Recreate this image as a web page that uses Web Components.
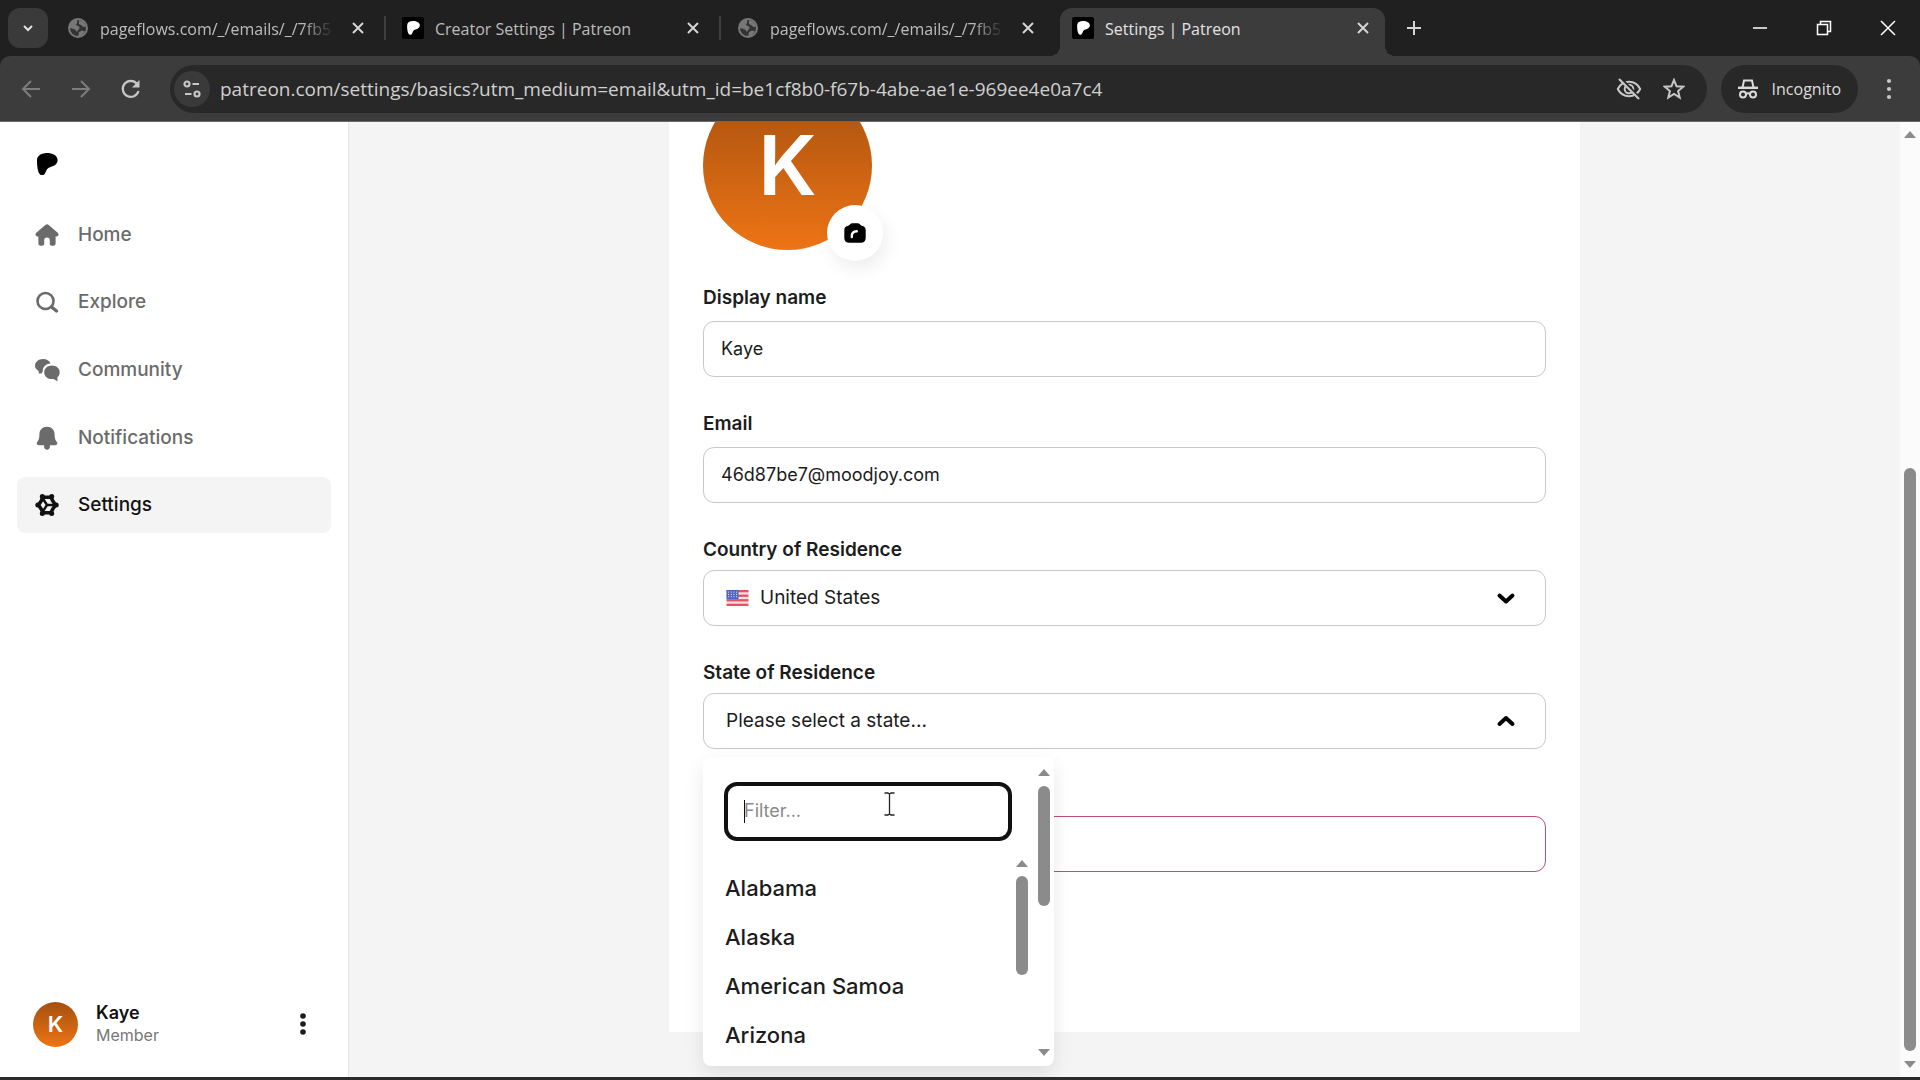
<!DOCTYPE html>
<html lang="en">
<head>
<meta charset="utf-8">
<title>Settings | Patreon</title>
<style>
html, body { margin: 0; height: 100%; }
body { font-family: Inter, "Liberation Sans", sans-serif; color: #1c1c1c; overflow: hidden; }
</style>
</head>
<body>
<browser-window></browser-window>

<script>
const RESET = `*,*::before,*::after{box-sizing:border-box}
button,input,select{font:inherit;color:inherit;border:0;background:none;padding:0;margin:0;outline:0;appearance:none}
a{color:inherit;text-decoration:none}
svg{display:block;flex:none}`;

const define = (name, render) => customElements.define(name, class extends HTMLElement {
  connectedCallback() {
    if (this.shadowRoot) return;
    const html = render(this);
    this.attachShadow({ mode: 'open' }).innerHTML = `<style>${RESET}</style>${html}`;
  }
});

const PATREON = 'M1 7.2C1 3.2 4.4.6 8.9.2 15.4-.5 21.5 2.300 21.6 7c.1 4-3.400 5.800-7.200 6.900-3.200 1-3.700 2.700-4.700 5-.9 2-1.900 3.400-3.800 3.300C1.800 22.100 1 13.200 1 7.200z';

const ICONS = {
  globe: [22, '<circle cx="11" cy="11" r="9" fill="#333" stroke="#777" stroke-width="2"/><path d="M3 7c2-4 5-5.500 8-5l-1 2.500c1 1.500-1 2-1 3.500l3 1.500c1 1 .5 2.500-1 3.500l-1 2-2-2.500L3 11z" fill="#777"/><path d="M12 3l4 1.500 3.500 5-3 .5-2.500-2-2-1zM12 15l3-1.500 3 1-3 4-4 1.500z" fill="#777"/>'],
  favicon: [22, `<rect width="22" height="22" rx="2" fill="#000"/><g transform="translate(4.500 4) scale(.62)"><path d="${PATREON}" fill="#fff"/></g>`],
  close: [14, '<path d="M2 2l10 10M12 2L2 12" stroke="currentColor" stroke-width="2"/>'],
  plus: [16, '<path d="M8 1v14M1 8h14" stroke="currentColor" stroke-width="2"/>'],
  down: [12, '<path d="M2 4l4 4 4-4" fill="none" stroke="currentColor" stroke-width="2"/>'],
  minimise: [16, '<path d="M1 8h14" stroke="currentColor" stroke-width="1.500"/>'],
  restore: [16, '<path d="M1.500 4.500h10v10h-10zM4.500 4.500v-3h10v10h-3" fill="none" stroke="currentColor" stroke-width="1.500"/>'],
  shut: [16, '<path d="M1 1l14 14M15 1L1 15" stroke="currentColor" stroke-width="1.500"/>'],
  back: [20, '<path d="M19 10H2M10 2l-8 8 8 8" fill="none" stroke="currentColor" stroke-width="2"/>'],
  forward: [20, '<path d="M1 10h17M10 2l8 8-8 8" fill="none" stroke="currentColor" stroke-width="2"/>'],
  reload: [20, '<path d="M17.500 12A8 8 0 1 1 16 4.800" fill="none" stroke="currentColor" stroke-width="2.200"/><path d="M18.500 1v7.500H11z" fill="currentColor"/>'],
  tune: [20, '<g fill="none" stroke="currentColor" stroke-width="2.200"><circle cx="5" cy="5" r="2.500"/><path d="M10.500 5H17M3 15h6.500"/><circle cx="15" cy="15" r="2.500"/></g>'],
  eyeoff: [26, '<g fill="none" stroke="currentColor" stroke-width="2"><path d="M1.800 13C4 8.500 8 5.800 13 5.800S22 8.500 24.200 13C22 17.500 18 20.200 13 20.200S4 17.500 1.800 13z"/><circle cx="13" cy="13" r="4.300"/></g><path d="M5.500 2.800l19 20" stroke="#282828" stroke-width="2.500"/><path d="M3 3l20 20" stroke="currentColor" stroke-width="2.200"/>'],
  star: [22, '<path d="M11 2l2.500 6.200 6.700.5-5.100 4.300 1.600 6.500L11 16l-5.700 3.500 1.600-6.500L1.800 8.700l6.700-.5z" fill="none" stroke="currentColor" stroke-width="2"/>'],
  incognito: [22, '<g fill="none" stroke="currentColor" stroke-width="2"><path d="M5.500 9.500L7 2.500h8l1.500 7"/><path d="M1 9.800h20" stroke-width="2.400"/><circle cx="6" cy="16.500" r="3"/><circle cx="16" cy="16.500" r="3"/><path d="M9 16q2-1.500 4 0"/></g>'],
  kebab: [24, '<g fill="currentColor"><circle cx="12" cy="4" r="2.100"/><circle cx="12" cy="12" r="2.100"/><circle cx="12" cy="20" r="2.100"/></g>'],
  more: [24, '<g fill="currentColor"><circle cx="12" cy="4" r="2.800"/><circle cx="12" cy="12" r="2.800"/><circle cx="12" cy="20" r="2.800"/></g>'],
  logo: [22, `<path d="${PATREON}" fill="#000"/>`],
  home: [24, '<path d="M10.300 1.900a2.600 2.600 0 0 1 3.400 0l9 7.900c1.500 1.400.8 3.600-1.200 3.600h-.9v7.100c0 1.300-.9 2.200-2.200 2.200h-1.600c-1.200 0-2-.8-2-2v-3.300a2.800 2.800 0 0 0-5.600 0v3.300c0 1.200-.8 2-2 2H5.600c-1.300 0-2.200-.9-2.200-2.200v-7.100h-.9c-2 0-2.700-2.200-1.200-3.600z" fill="currentColor"/>'],
  search: [24, '<circle cx="10.500" cy="11" r="8" fill="none" stroke="currentColor" stroke-width="2.600"/><path d="M16.500 17l5 4" stroke="currentColor" stroke-width="3.400" stroke-linecap="round"/>'],
  chats: [26, '<path d="M9 2c3.600 0 6.500 1.800 7.500 4.400C11.600 6.800 8.600 10 8.800 14.200l-1.300 2.300-2.600.1-.4-2.900C2.300 12.500 1 10.800 1 8.700 1 4.900 4.600 2 9 2z" fill="currentColor"/><path d="M18 8.500c4.400 0 7.700 2.900 7.700 6.700 0 2-.8 3.700-2.300 5l.1 4-4-2.200c-5.300.7-9.300-2.400-9.300-6.800 0-3.800 3.400-6.700 7.800-6.700z" fill="currentColor"/>'],
  bell: [24, '<path d="M12 .8c-4.600 0-7.600 3.300-7.600 7.600 0 3.600-.7 5.600-2.100 7.400-1.300 1.700-.6 3.400 1.500 3.400h5.300v1.600c0 1.700 1.200 2.900 2.900 2.900s2.900-1.200 2.900-2.900v-1.600h5.300c2.100 0 2.800-1.700 1.500-3.400-1.400-1.800-2.100-3.800-2.100-7.400C19.600 4.100 16.600.8 12 .8z" fill="currentColor"/>'],
  gear: [24, '<g fill="none" stroke="currentColor" stroke-linejoin="round"><path d="M8 4.200h8l1.500 3.400 3 4.400-3 4.400-1.500 3.400H8l-1.500-3.400-3-4.400 3-4.400z" stroke-width="3.600"/><path d="M12 12h8M12 12L7.500 5M12 12l-4.500 7" stroke-width="2.400"/></g><g fill="currentColor"><circle cx="7.300" cy="3.400" r="2.500"/><circle cx="16.700" cy="3.400" r="2.500"/><circle cx="7.300" cy="20.600" r="2.500"/><circle cx="16.700" cy="20.600" r="2.500"/><circle cx="2.800" cy="12" r="2.500"/><circle cx="21.200" cy="12" r="2.500"/></g>'],
  camera: [24, '<path d="M9.300 2.300h5.400c2 0 2.300 2 4 2.400 2.800.4 4 1.900 4 4.500v7.600c0 3.300-1.700 5-5 5H6.300c-3.300 0-5-1.700-5-5V9.200c0-2.600 1.200-4.100 4-4.500 1.700-.4 2-2.400 4-2.400z" fill="#000"/><path d="M8.800 16c-.4-3.600 1.300-5.600 5-5.700" fill="none" stroke="#fff" stroke-width="2.400" stroke-linecap="round"/>'],
  chevdown: [20, '<path d="M3.500 7.500L10 13.500l6.500-6" fill="none" stroke="#000" stroke-width="4" stroke-linecap="round" stroke-linejoin="round"/>'],
  chevup: [20, '<path d="M3.500 13L10 7l6.500 6" fill="none" stroke="#000" stroke-width="4" stroke-linecap="round" stroke-linejoin="round"/>']
};

define('ui-icon', el => {
  const [size, art] = ICONS[el.getAttribute('name')];
  return `<style>:host{display:block;flex:none}</style><svg width="${size}" height="${size}" viewBox="0 0 ${size} ${size}" aria-hidden="true">${art}</svg>`;
});

define('us-flag', () => {
  const stripes = [0, 2, 4, 6].map(i => `<rect y="${i * 2.3}" width="22" height="2.300" fill="#e0555f"/>`).join('');
  let stars = '';
  for (let y = 0; y < 3; y++) for (let x = 0; x < 4; x++) stars += `<circle cx="${2 + x * 2.7}" cy="${2 + y * 2.4}" r=".6" fill="#fff"/>`;
  return `<style>:host{display:block}</style><svg width="23" height="16" viewBox="0 0 22 16.100"><rect width="22" height="16.100" fill="#f6dfe1"/>${stripes}<rect width="12" height="9.200" fill="#4a66c4"/>${stars}</svg>`;
});

define('scroll-bar', el => {
  const [before, thumb, after] = el.getAttribute('parts').split(' ');
  return `<style>
:host{display:flex;flex-direction:column;align-items:center;width:20px;flex:none}
.arrow{height:20px;display:flex;align-items:center;flex:none}
.before{flex:${before} 1 0}.after{flex:${after} 1 0}
.thumb{flex:${thumb} 1 0;width:12px;border-radius:6px;background:#8b8b8b}
</style>
<div class="arrow"><svg width="12" height="8"><path d="M6 1l6 7H0z" fill="#8b8b8b"/></svg></div>
<div class="before"></div><div class="thumb"></div><div class="after"></div>
${el.hasAttribute('open-end') ? '' : '<div class="arrow"><svg width="12" height="8"><path d="M6 7l6-7H0z" fill="#8b8b8b"/></svg></div>'}`;
});

define('browser-tab', el => `<style>
:host{display:block;width:325px;min-width:0;position:relative;color:#bdbdbd}
:host([active]){background:#3c3c3c;border-radius:12px 12px 0 0;color:#e3e3e3}
:host([active])::before,:host([active])::after{content:"";position:absolute;bottom:0;width:10px;height:10px}
:host([active])::before{right:100%;background:radial-gradient(circle at 0 0,transparent 10px,#3c3c3c 10px)}
:host([active])::after{left:100%;background:radial-gradient(circle at 100% 0,transparent 10px,#3c3c3c 10px)}
.row{display:flex;align-items:center;height:40px;padding:0 15px 0 12px;gap:11px}
.title{flex:1;min-width:0;overflow:hidden;white-space:nowrap;line-height:24px;padding-top:2px}
:host([fade]) .title{-webkit-mask:linear-gradient(90deg,#000 calc(100% - 32px),transparent)}
button{display:flex;color:#d5d5d5;margin-left:6px}
</style>
<div class="row"><ui-icon name="${el.getAttribute('icon')}"></ui-icon><div class="title"><slot></slot></div><button><ui-icon name="close"></ui-icon></button></div>`);

define('tab-strip', () => `<style>
:host{display:flex;height:56px;padding:8px 8px 0;background:#202020;font-family:"Open Sans","Liberation Sans",sans-serif;font-size:16px}
.search{width:40px;height:40px;border-radius:12px;background:#3a3a3a;color:#e3e3e3;display:grid;place-items:center;margin-right:7px;flex:none}
.sep{width:2px;height:24px;background:#3f3f3f;margin:8px 4px 0;flex:none}
.sep.off{background:none}
.new{display:grid;place-items:center;width:40px;height:40px;color:#d5d5d5;margin-left:9px;flex:none}
.win{margin-left:auto;display:flex;flex:none;color:#fff}
.win button{width:64px;height:40px;display:grid;place-items:center}
.win button:last-child{width:48px;margin-left:8px}
</style>
<button class="search"><ui-icon name="down"></ui-icon></button>
<browser-tab icon="globe" fade>pageflows.com/_/emails/_/7fb5</browser-tab><div class="sep"></div>
<browser-tab icon="favicon">Creator Settings | Patreon</browser-tab><div class="sep"></div>
<browser-tab icon="globe" fade>pageflows.com/_/emails/_/7fb5</browser-tab><div class="sep off"></div>
<browser-tab icon="favicon" active>Settings | Patreon</browser-tab>
<button class="new"><ui-icon name="plus"></ui-icon></button>
<div class="win"><button><ui-icon name="minimise"></ui-icon></button><button><ui-icon name="restore"></ui-icon></button><button><ui-icon name="shut"></ui-icon></button></div>`);

define('tool-bar', () => `<style>
:host{display:block;background:#202020;font-family:"Open Sans","Liberation Sans",sans-serif;font-size:16px}
.bar{display:flex;align-items:center;height:66px;background:#3c3c3c;border-radius:10px 10px 0 0;border-bottom:1px solid #6a6a6a;padding:0 19px 0 21px;color:#c7c7c7}
.nav{display:flex;gap:30px;flex:none;margin-right:29px}
.nav button:disabled{color:#7d7d7d}
.omni{flex:1;display:flex;align-items:center;height:48px;border-radius:24px;background:#282828;padding:0 22px 0 4px}
.info{width:36px;height:36px;border-radius:18px;background:#3a3a3a;display:grid;place-items:center;flex:none}
input{flex:1;min-width:0;margin:0 10px;height:36px;font-size:19px;color:#d0d0d0}
.acts{display:flex;align-items:center;gap:21px}
.incog{display:flex;align-items:center;gap:13px;height:48px;border-radius:24px;background:#282828;color:#dcdcdc;padding:0 17px 0 16px;margin:0 19px 0 14px;flex:none}
</style>
<div class="bar">
<div class="nav"><button disabled><ui-icon name="back"></ui-icon></button><button disabled><ui-icon name="forward"></ui-icon></button><button><ui-icon name="reload"></ui-icon></button></div>
<div class="omni"><button class="info"><ui-icon name="tune"></ui-icon></button>
<input type="text" value="patreon.com/settings/basics?utm_medium=email&amp;utm_id=be1cf8b0-f67b-4abe-ae1e-969ee4e0a7c4">
<div class="acts"><button><ui-icon name="eyeoff"></ui-icon></button><button><ui-icon name="star"></ui-icon></button></div></div>
<button class="incog"><ui-icon name="incognito"></ui-icon><span>Incognito</span></button>
<button><ui-icon name="kebab"></ui-icon></button>
</div>`);

define('nav-item', el => `<style>
:host{display:block;color:#6b6b6b}
:host([active]){color:#111}
:host([active]) a{background:#f4f4f4}
a{display:flex;align-items:center;gap:17px;padding:16px;border-radius:8px;font-size:19px;line-height:24px;font-weight:500}
i{width:28px;display:grid;place-items:center}
</style>
<a href="#"><i><ui-icon name="${el.getAttribute('icon')}"></ui-icon></i><slot></slot></a>`);

define('letter-avatar', () => `<style>
:host{display:grid;place-items:center;width:var(--size);height:var(--size);border-radius:50%;background:linear-gradient(#a4500f,#ee7415);color:#fff;font-size:var(--letter);line-height:1;font-weight:600;flex:none}
</style><slot></slot>`);

define('side-bar', () => `<style>
:host{display:flex;flex-direction:column;width:349px;flex:none;background:#fff;border-right:1px solid #e6e6e6;padding:31px 17px 30px}
.logo{padding-left:19px;margin-bottom:32px}
nav{display:flex;flex-direction:column;gap:11px}
.user{margin-top:auto;display:flex;align-items:center;padding:0 16px;gap:18px}
.who{flex:1;line-height:23px}
b{display:block;font-size:18px;font-weight:600;color:#111}
small{display:block;font-size:16px;color:#777}
</style>
<a class="logo" href="#"><ui-icon name="logo"></ui-icon></a>
<nav>
<nav-item icon="home">Home</nav-item><nav-item icon="search">Explore</nav-item><nav-item icon="chats">Community</nav-item><nav-item icon="bell">Notifications</nav-item><nav-item icon="gear" active>Settings</nav-item>
</nav>
<div class="user"><letter-avatar style="--size:45px;--letter:22px">K</letter-avatar><div class="who"><b>Kaye</b><small>Member</small></div><button><ui-icon name="more"></ui-icon></button></div>`);

const FIELD = `:host{display:block;position:relative}
label{display:block;min-height:24px;line-height:24px;font-size:19px;font-weight:600}
.box{display:flex;align-items:center;height:56px;border:1px solid #c8c8c8;border-radius:11px;background:#fff;font-size:18px}`;

define('text-field', el => `<style>${FIELD}
label{margin-bottom:11px}
input{width:100%;height:100%;padding:0 17px 2px;border-radius:inherit}
:host([invalid]) label{margin-bottom:8px}
:host([invalid]) .box{border-color:#bd4f74}
</style>
<label for="f">${el.getAttribute('label') || ''}</label>
<div class="box"><input id="f" type="text" value="${el.getAttribute('value') || ''}"></div>`);

define('select-field', el => `<style>${FIELD}
label{margin-bottom:8px}
.box{padding:0 29px 0 22px;gap:11px}
select{flex:1;min-width:0;height:100%;padding-bottom:2px;font-size:19px}
ui-icon{pointer-events:none}
</style>
<label for="f">${el.getAttribute('label')}</label>
<div class="box"><slot name="lead"></slot><select id="f"><option>${el.getAttribute('value')}</option></select><ui-icon name="${el.hasAttribute('open') ? 'chevup' : 'chevdown'}"></ui-icon></div>
<slot></slot>`);

define('option-menu', () => `<style>
:host{position:absolute;z-index:2;top:calc(100% + 8px);left:0;width:351px;height:309px;display:flex;overflow:hidden;background:#fff;border-radius:8px}
.main{flex:1;min-width:0;padding:25px 2px 0 21px}
input{display:block;width:288px;height:59px;border:4px solid #111;border-radius:13px;padding:0 16px 2px;font-size:18px}
input::placeholder{color:#8a8a8a;opacity:1}
.list{display:flex;height:213px;margin-top:12px}
.opts{flex:1;padding-top:10px}
.opts button{display:block;width:100%;text-align:left;height:49px;padding:0 1px;font-size:22px;font-weight:500}
scroll-bar.outer{padding:5px 0 3px}
.caret{position:absolute;left:41px;top:43px;width:1px;height:23px;background:#111}
.ibeam{position:absolute;left:181px;top:35px}
</style>
<div class="main"><input type="text" placeholder="Filter...">
<div class="list"><div class="opts"><button>Alabama</button><button>Alaska</button><button>American Samoa</button><button>Arizona</button></div><scroll-bar parts="3 99 91" open-end></scroll-bar></div></div>
<scroll-bar class="outer" parts="4 120 137"></scroll-bar>
<div class="caret"></div>
<svg class="ibeam" width="11" height="24"><path d="M.5 1h3.500l1.500 1L7 1h3.500M.5 23h3.500l1.500-1L7 23h3.500M5.500 2v20" fill="none" stroke="#222" stroke-width="1.300"/></svg>`);

define('profile-card', () => `<style>
:host{display:block;width:911px;max-width:100%;margin:-74px auto 0;padding:33px 34px 160px;background:#fff}
.pic{position:relative;width:169px;margin-bottom:36px}
.pic button{position:absolute;right:-11px;bottom:-11px;width:56px;height:56px;border-radius:28px;background:#fff;display:grid;place-items:center;box-shadow:4px 8px 18px rgba(0,0,0,.07)}
form{display:flex;flex-direction:column;gap:35px}
.state{z-index:1}
option-menu{box-shadow:0 8px 20px rgba(0,0,0,.09)}
</style>
<div class="pic"><letter-avatar style="--size:169px;--letter:83px">K</letter-avatar><button><ui-icon name="camera"></ui-icon></button></div>
<form>
<text-field label="Display name" value="Kaye"></text-field>
<text-field label="Email" value="46d87be7@moodjoy.com"></text-field>
<select-field label="Country of Residence" value="United States"><us-flag slot="lead"></us-flag></select-field>
<select-field class="state" label="State of Residence" value="Please select a state..." open><option-menu></option-menu></select-field>
<text-field invalid></text-field>
</form>`);

define('browser-window', () => `<style>
:host{display:flex;flex-direction:column;height:100vh}
.page{flex:1;min-height:0;display:flex;overflow:hidden;background:#f4f4f4}
main{flex:1;min-width:0;overflow:hidden}
.pagebar{background:#fbfbfb;padding:2px 0}
footer{height:3px;background:#2b2b2b;flex:none}
</style>
<tab-strip></tab-strip><tool-bar></tool-bar>
<div class="page"><side-bar></side-bar><main><profile-card></profile-card></main><scroll-bar class="pagebar" parts="324 583 4"></scroll-bar></div>
<footer></footer>`);
</script>
</body>
</html>
